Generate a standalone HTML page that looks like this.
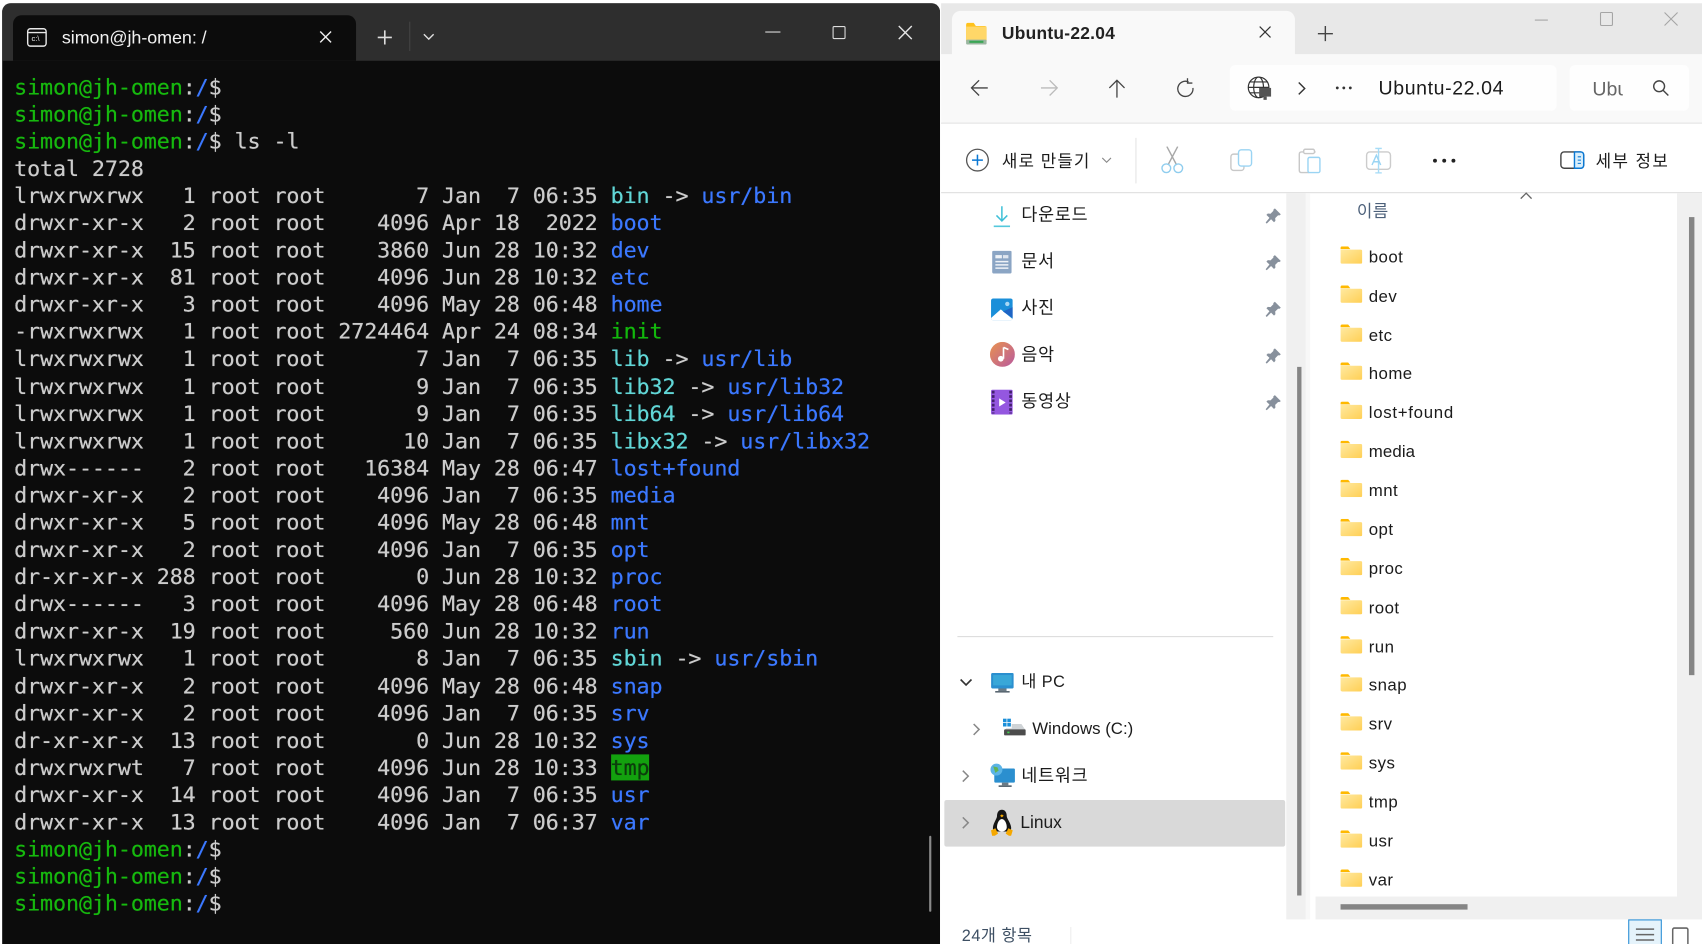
<!DOCTYPE html>
<html lang="ko"><head><meta charset="utf-8"><title>Ubuntu-22.04</title>
<style>
html,body{margin:0;padding:0;background:#fff;width:1702px;height:944px;overflow:hidden}
#w{position:absolute;left:0;top:0;width:1568px;height:870px;transform:scale(1.08546);transform-origin:0 0;overflow:hidden;background:#fff;font-family:"Liberation Sans","Noto Sans CJK KR",sans-serif;filter:blur(.3px)}
#w div,#w svg,#w pre{position:absolute}
.t{white-space:nowrap;color:#1b1b1b;line-height:20px}
pre{margin:0;left:13px;top:67.5px;font:20px/25.1px "DejaVu Sans Mono","Liberation Mono",monospace;letter-spacing:-.095px;color:#ccc;text-shadow:0 0 .5px currentColor}
.g{color:#16b80e}.b{color:#3b78ff}.c{color:#61d6d6}.e{color:#12b80c}.h{background:#13a10e;color:#0c3c0c}
.k{font-size:15.5px;letter-spacing:.4px;color:#1b1b1b}
.n{font-size:16px;color:#1b1b1b}
</style></head><body>
<div id="w">
<svg width="0" height="0"><defs>
<linearGradient id="fg" x1="0" y1="0" x2="1" y2="1"><stop offset="0" stop-color="#ffe9a0"/><stop offset="1" stop-color="#ffcf55"/></linearGradient>
<symbol id="fo" viewBox="0 0 20 16"><path d="M0 1.500Q0 0 1.500 0H7l2 2.500H0z" fill="#ffb900"/><path d="M0 3h18.500Q20 3 20 4.500V14.500Q20 16 18.500 16H1.500Q0 16 0 14.500z" fill="url(#fg)"/></symbol>
<symbol id="pin" viewBox="0 0 16 16"><path d="M9.500 1l5.500 5.500-1.500 1-1-.2-2.700 2.700.2 2.500-1.300 1.300-2.700-2.800L2 15l-1-1 3.500-4.300L1.700 7l1.300-1.300 2.500.2L8.200 3.200 8 2.300z" fill="#87909c"/></symbol>
<symbol id="mon" viewBox="0 0 22 20"><rect x="0" y="0" width="22" height="15" rx="1.500" fill="#2b8fcf"/><rect x="2" y="2" width="18" height="10" fill="#39a7d8"/><rect x="7" y="15" width="8" height="2.500" fill="#6c7b86"/><rect x="4" y="17.500" width="14" height="1.500" fill="#55636e"/></symbol>
</defs></svg>

<!-- TERMINAL -->
<div style="left:2px;top:3px;width:864px;height:867px;background:#0c0c0c;border-radius:8px 8px 0 0;overflow:hidden">
  <div style="left:0;top:0;width:864px;height:53px;background:#2e2e2e"></div>
  <div style="left:10px;top:11px;width:316px;height:42px;background:#0c0c0c;border-radius:8px 8px 0 0"></div>
</div>
<svg style="left:24px;top:25px" width="20" height="20" viewBox="0 0 20 20" fill="none" stroke="#e8e8e8" stroke-width="1.300"><rect x="1.500" y="1.500" width="17" height="16" rx="2.500"/><path d="M2 5h16"/></svg>
<div class="t" style="left:29px;top:33px;font:7px 'Liberation Sans';color:#eee">c:\</div>
<div class="t" style="left:57px;top:25px;color:#f2f2f2;font-size:16.500px;letter-spacing:-.05px">simon@jh-omen: /</div>
<svg style="left:294px;top:28px" width="12" height="12" fill="none" stroke="#eee" stroke-width="1.300"><path d="M1 1l10 10M11 1L1 11"/></svg>
<svg style="left:347px;top:27px" width="15" height="15" fill="none" stroke="#ddd" stroke-width="1.500"><path d="M7.500 1v13M1 7.500h13"/></svg>
<div style="left:377px;top:20px;width:1px;height:27px;background:#444"></div>
<svg style="left:389px;top:30px" width="12" height="8" fill="none" stroke="#ddd" stroke-width="1.300"><path d="M1.500 1.500L6 6l4.500-4.500"/></svg>
<div style="left:705px;top:29px;width:14px;height:1.300px;background:#ddd"></div>
<div style="left:767px;top:24px;width:10px;height:10px;border:1.300px solid #ddd;border-radius:1.500px"></div>
<svg style="left:827px;top:23px" width="14" height="14" fill="none" stroke="#e5e5e5" stroke-width="1.300"><path d="M1 1l12 12M13 1L1 13"/></svg>
<pre><span class="g">simon@jh-omen</span>:<span class="b">/</span>$
<span class="g">simon@jh-omen</span>:<span class="b">/</span>$
<span class="g">simon@jh-omen</span>:<span class="b">/</span>$ ls -l
total 2728
lrwxrwxrwx   1 root root       7 Jan  7 06:35 <span class="c">bin</span> -&gt; <span class="b">usr/bin</span>
drwxr-xr-x   2 root root    4096 Apr 18  2022 <span class="b">boot</span>
drwxr-xr-x  15 root root    3860 Jun 28 10:32 <span class="b">dev</span>
drwxr-xr-x  81 root root    4096 Jun 28 10:32 <span class="b">etc</span>
drwxr-xr-x   3 root root    4096 May 28 06:48 <span class="b">home</span>
-rwxrwxrwx   1 root root 2724464 Apr 24 08:34 <span class="e">init</span>
lrwxrwxrwx   1 root root       7 Jan  7 06:35 <span class="c">lib</span> -&gt; <span class="b">usr/lib</span>
lrwxrwxrwx   1 root root       9 Jan  7 06:35 <span class="c">lib32</span> -&gt; <span class="b">usr/lib32</span>
lrwxrwxrwx   1 root root       9 Jan  7 06:35 <span class="c">lib64</span> -&gt; <span class="b">usr/lib64</span>
lrwxrwxrwx   1 root root      10 Jan  7 06:35 <span class="c">libx32</span> -&gt; <span class="b">usr/libx32</span>
drwx------   2 root root   16384 May 28 06:47 <span class="b">lost+found</span>
drwxr-xr-x   2 root root    4096 Jan  7 06:35 <span class="b">media</span>
drwxr-xr-x   5 root root    4096 May 28 06:48 <span class="b">mnt</span>
drwxr-xr-x   2 root root    4096 Jan  7 06:35 <span class="b">opt</span>
dr-xr-xr-x 288 root root       0 Jun 28 10:32 <span class="b">proc</span>
drwx------   3 root root    4096 May 28 06:48 <span class="b">root</span>
drwxr-xr-x  19 root root     560 Jun 28 10:32 <span class="b">run</span>
lrwxrwxrwx   1 root root       8 Jan  7 06:35 <span class="c">sbin</span> -&gt; <span class="b">usr/sbin</span>
drwxr-xr-x   2 root root    4096 May 28 06:48 <span class="b">snap</span>
drwxr-xr-x   2 root root    4096 Jan  7 06:35 <span class="b">srv</span>
dr-xr-xr-x  13 root root       0 Jun 28 10:32 <span class="b">sys</span>
drwxrwxrwt   7 root root    4096 Jun 28 10:33 <span class="h">tmp</span>
drwxr-xr-x  14 root root    4096 Jan  7 06:35 <span class="b">usr</span>
drwxr-xr-x  13 root root    4096 Jan  7 06:37 <span class="b">var</span>
<span class="g">simon@jh-omen</span>:<span class="b">/</span>$
<span class="g">simon@jh-omen</span>:<span class="b">/</span>$
<span class="g">simon@jh-omen</span>:<span class="b">/</span>$</pre>
<div style="left:856px;top:770px;width:2px;height:70px;background:#8a8a8a;border-radius:1px"></div>

<!-- EXPLORER CHROME -->
<div style="left:867px;top:3px;width:701px;height:47px;background:#e8e8e8"></div>
<div style="left:877px;top:10px;width:316px;height:41px;background:#f9f9f9;border-radius:8px 8px 0 0"></div>
<div style="left:867px;top:50px;width:701px;height:63px;background:#f9f9f9;border-bottom:1px solid #e0e0e0"></div>
<svg style="left:890px;top:21px" width="19" height="20" viewBox="0 0 19 20"><path d="M0 2Q0 0 2 0H7l2 3h8q2 0 2 2v12H0z" fill="#ffc21c"/><rect y="3.500" width="19" height="13" fill="#ffd768"/><rect y="15.500" width="19" height="4.500" rx="1" fill="#9ab6a0"/><rect x="3" y="16.500" width="13" height="2" fill="#3aa655"/></svg>
<div class="t" style="left:923px;top:22px;font-size:16px;font-weight:700;color:#222;letter-spacing:.25px">Ubuntu-22.04</div>
<svg style="left:1160px;top:24px" width="11" height="11" fill="none" stroke="#333" stroke-width="1.100"><path d="M.5.500l10 10M10.500.500l-10 10"/></svg>
<svg style="left:1214px;top:24px" width="14" height="14" fill="none" stroke="#444" stroke-width="1.300"><path d="M7 0v14M0 7h14"/></svg>
<div style="left:1414px;top:18px;width:12px;height:1px;background:#a5a5a5"></div>
<div style="left:1474px;top:11px;width:10px;height:11px;border:1px solid #a5a5a5;border-radius:1.500px"></div>
<svg style="left:1533px;top:11px" width="13" height="13" fill="none" stroke="#a5a5a5" stroke-width="1"><path d="M.5.500l12 12M12.500.500l-12 12"/></svg>

<svg style="left:894px;top:73px" width="17" height="16" fill="none" stroke="#444" stroke-width="1.200"><path d="M16 8H1M8 1L1 8l7 7"/></svg>
<svg style="left:958px;top:73px" width="17" height="16" fill="none" stroke="#bbb" stroke-width="1.200"><path d="M1 8h15M9 1l7 7-7 7"/></svg>
<svg style="left:1021px;top:73px" width="16" height="17" fill="none" stroke="#444" stroke-width="1.200"><path d="M8 17V1M1 8l7-7 7 7"/></svg>
<svg style="left:1084px;top:72px" width="17" height="18" fill="none" stroke="#444" stroke-width="1.200"><path d="M11 3.500A7 7 0 1 0 15 9"/><path d="M10 0v4.500h4.500"/></svg>
<div style="left:1133px;top:60px;width:301px;height:42px;background:#fefefe;border-radius:5px"></div>
<svg style="left:1149px;top:70px" width="24" height="24" viewBox="0 0 24 24" fill="none" stroke="#333" stroke-width="1.100"><circle cx="10.500" cy="10.500" r="9.500"/><ellipse cx="10.500" cy="10.500" rx="4.500" ry="9.500"/><path d="M1 10.500h19M2.500 5.500h16M2.500 15.500h16"/><rect x="11" y="11" width="11" height="8" fill="#555" stroke="none"/><rect x="15" y="19" width="3" height="3" fill="#555" stroke="none"/></svg>
<svg style="left:1195px;top:75px" width="9" height="13" fill="none" stroke="#333" stroke-width="1.300"><path d="M1.500 1l5.500 5.500L1.500 12"/></svg>
<svg style="left:1230px;top:79px" width="16" height="4" fill="#333"><circle cx="2" cy="2" r="1.300"/><circle cx="8" cy="2" r="1.300"/><circle cx="14" cy="2" r="1.300"/></svg>
<div class="t" style="left:1270px;top:71px;font-size:18px;color:#1b1b1b;letter-spacing:.55px">Ubuntu-22.04</div>
<div style="left:1446px;top:60px;width:110px;height:42px;background:#fefefe;border-radius:5px"></div>
<div class="t" style="left:1467px;top:72px;width:28px;overflow:hidden;font-size:18px;color:#666">Ubuntu</div>
<svg style="left:1522px;top:73px" width="16" height="16" fill="none" stroke="#444" stroke-width="1.300"><circle cx="6.500" cy="6.500" r="5"/><path d="M10 10l5 5"/></svg>

<!-- TOOLBAR -->
<div style="left:867px;top:114px;width:701px;height:63px;background:#fff;border-bottom:1px solid #dedede"></div>
<svg style="left:889px;top:136px" width="23" height="23" fill="none"><circle cx="11.500" cy="11.500" r="10" stroke="#555" stroke-width="1.200"/><path d="M11.500 6.500v10M6.500 11.500h10" stroke="#0a78d4" stroke-width="1.400"/></svg>
<div class="t n" style="left:923px;top:138px;font-size:15.500px;letter-spacing:1px;top:140px">새로 만들기</div>
<svg style="left:1015px;top:145px" width="9" height="6" fill="none" stroke="#888"><path d="M.5.500L4.500 4.500 8.500.500"/></svg>
<div style="left:1046px;top:127px;width:1px;height:42px;background:#e5e5e5"></div>
<svg style="left:1069px;top:135px" width="22" height="25" fill="none" stroke-width="1.300"><path d="M6 0l9 17M16 0L7 17" stroke="#a8a8a8"/><circle cx="5.500" cy="20" r="4" stroke="#8fcdee"/><circle cx="16.500" cy="20" r="4" stroke="#8fcdee"/></svg>
<svg style="left:1133px;top:137px" width="21" height="23" fill="none" stroke-width="1.300"><rect x="1" y="5" width="12" height="15" rx="2.500" stroke="#c8c8c8"/><rect x="8" y="1" width="12" height="15" rx="2.500" fill="#fff" stroke="#9ad4f3"/></svg>
<svg style="left:1196px;top:136px" width="21" height="24" fill="none" stroke-width="1.300"><path d="M5 4H3Q1 4 1 6v15q0 2 2 2h7M16 4h-1" stroke="#c8c8c8"/><rect x="5" y="1.500" width="10" height="4" rx="1.500" stroke="#c8c8c8"/><rect x="9" y="9" width="11" height="14" rx="1.500" stroke="#9ad4f3"/></svg>
<svg style="left:1258px;top:136px" width="24" height="24" fill="none" stroke-width="1.300"><rect x="1" y="4" width="22" height="16" rx="3" stroke="#ccc"/><path d="M12 .5v23M9 .7h6M9 23.300h6" stroke="#a6dcf7" fill="#fff"/><path d="M6 16l4-9 4 9M7.500 13h5" stroke="#9ad4f3"/></svg>
<svg style="left:1319px;top:145px" width="23" height="6" fill="#222"><circle cx="3" cy="3" r="1.800"/><circle cx="11.500" cy="3" r="1.800"/><circle cx="20" cy="3" r="1.800"/></svg>
<svg style="left:1437px;top:139px" width="23" height="18" fill="none" stroke-width="1.300"><rect x="1" y="1" width="21" height="15" rx="3" stroke="#444"/><path d="M13.500 1H19q3 0 3 3v9q0 3-3 3h-5.500z" fill="#d8eefb" stroke="#0a78d4"/><path d="M16.500 5.500h3M16.500 8.500h3M16.500 11.500h3" stroke="#0a78d4" stroke-width="1"/></svg>
<div class="t n" style="left:1470px;top:140px;font-size:15.500px;letter-spacing:1.300px">세부 정보</div>

<!-- SIDEBAR -->
<div style="left:1185px;top:178px;width:18px;height:669px;background:#f0f0f0"></div>
<div style="left:1195px;top:338px;width:4px;height:487px;background:#858585"></div>
<div style="left:1203px;top:178px;width:4px;height:669px;background:#f8f8f8"></div>

<svg style="left:914px;top:189px" width="18" height="21" fill="none" stroke="#3fc0d8" stroke-width="1.400"><path d="M9 1v13M4 9.500L9 14.500l5-5"/><path d="M1.500 19.500h15" stroke="#55c8dc"/></svg>
<div class="t n" style="left:941px;top:189px;letter-spacing:.7px">다운로드</div>
<svg style="left:914px;top:231px" width="18" height="21"><rect width="18" height="21" rx="1.500" fill="#8ba5c4"/><rect x="3" y="4" width="6" height="3" fill="#eef2f7"/><rect x="10" y="4" width="5" height="3" fill="#dfe6ef"/><path d="M3 10h12M3 13h12M3 16h12" stroke="#eef2f7" stroke-width="1.400"/></svg>
<div class="t n" style="left:941px;top:232px;letter-spacing:.7px">문서</div>
<svg style="left:913px;top:275px" width="20" height="20"><rect width="20" height="20" rx="2" fill="#1b8fd9"/><path d="M0 18L9 10l11 9v-1 0q0 2-2 2H2q-2 0-2-2z" fill="#fff"/><circle cx="15" cy="5" r="2" fill="#a8d8f5"/><path d="M11 12l9 6V8z" fill="#1f64c4"/></svg>
<div class="t n" style="left:941px;top:275px;letter-spacing:.7px">사진</div>
<svg style="left:912px;top:315px" width="23" height="23"><defs><linearGradient id="mu" x1="0" y1="0" x2="1" y2="1"><stop offset="0" stop-color="#e8924f"/><stop offset="1" stop-color="#b95a9e"/></linearGradient></defs><circle cx="11.500" cy="11.500" r="11.500" fill="url(#mu)"/><path d="M12.500 5v10.500" stroke="#fff" stroke-width="1.500"/><path d="M12.500 5l4.500 2" stroke="#fff" stroke-width="1.500"/><circle cx="10" cy="15.500" r="2.600" fill="#fff"/></svg>
<div class="t n" style="left:941px;top:318px;letter-spacing:.7px">음악</div>
<svg style="left:913px;top:359px" width="20" height="23"><rect width="20" height="23" rx="1.500" fill="#9457e0"/><path d="M2 1v21M18 1v21" stroke="#43206e" stroke-width="2.500" stroke-dasharray="2.500 1.500"/><path d="M7.500 8v7.500l6-3.700z" fill="#fff"/></svg>
<div class="t n" style="left:941px;top:361px;letter-spacing:.7px">동영상</div>
<svg style="left:1165px;top:191px" width="16" height="16"><use href="#pin"/></svg>
<svg style="left:1165px;top:234px" width="16" height="16"><use href="#pin"/></svg>
<svg style="left:1165px;top:277px" width="16" height="16"><use href="#pin"/></svg>
<svg style="left:1165px;top:320px" width="16" height="16"><use href="#pin"/></svg>
<svg style="left:1165px;top:363px" width="16" height="16"><use href="#pin"/></svg>
<div style="left:882px;top:586px;width:291px;height:1px;background:#dcdcdc"></div>
<svg style="left:884px;top:625px" width="12" height="8" fill="none" stroke="#333" stroke-width="1.500"><path d="M1 1l5 5 5-5"/></svg>
<svg style="left:913px;top:620px" width="21" height="19"><use href="#mon"/></svg>
<div class="t n" style="left:941px;top:619px;font-size:15px;letter-spacing:.4px">내 PC</div>
<svg style="left:896px;top:666px" width="8" height="12" fill="none" stroke="#888" stroke-width="1.400"><path d="M1 1l5 5-5 5"/></svg>
<svg style="left:924px;top:662px" width="21" height="18"><rect x="0" y="0" width="3.300" height="3.300" fill="#1b8fd9"/><rect x="4" y="0" width="3.300" height="3.300" fill="#1b8fd9"/><rect x="0" y="4" width="3.300" height="3.300" fill="#1b8fd9"/><rect x="4" y="4" width="3.300" height="3.300" fill="#1b8fd9"/><path d="M8 5h9l4 6H1l2-2h5z" fill="#cfd3d6"/><rect x="1" y="10" width="20" height="5.500" rx="1" fill="#4c4c4c"/><rect x="4" y="12" width="2" height="1.500" fill="#3fd44c"/></svg>
<div class="t n" style="left:951px;top:662px;font-size:15.500px">Windows (C:)</div>
<svg style="left:886px;top:709px" width="8" height="12" fill="none" stroke="#888" stroke-width="1.400"><path d="M1 1l5 5-5 5"/></svg>
<svg style="left:912px;top:703px" width="24" height="23"><rect x="4" y="5" width="19" height="13" rx="1" fill="#2b8fcf"/><rect x="11" y="18" width="6" height="2.500" fill="#6c7b86"/><rect x="8" y="20.500" width="12" height="1.500" fill="#55636e"/><circle cx="6" cy="6" r="5.500" fill="#5cb4e6"/><path d="M3 3l4 1 1 3-3 2z" fill="#62b356"/></svg>
<div class="t n" style="left:941px;top:706px;letter-spacing:.7px">네트워크</div>
<div style="left:870px;top:737px;width:314px;height:43px;background:#d9d9d9;border-radius:2px"></div>
<svg style="left:886px;top:752px" width="8" height="12" fill="none" stroke="#888" stroke-width="1.400"><path d="M1 1l5 5-5 5"/></svg>
<svg style="left:912px;top:745px" width="22" height="26" viewBox="0 0 22 26"><path d="M11 1c3 0 4.500 2.500 4.500 6 0 2 3.500 6 4 10 .3 3-1 4-2 4H5c-1.500 0-2.500-1-2.200-4C3.300 13 6.500 9 6.500 7 6.500 3.500 8 1 11 1z" fill="#151515"/><path d="M11 9.500c-2.500 0-4.500 4-4.500 7.500 0 2 1.500 4 4.500 4s4.500-2 4.500-4c0-3.500-2-7.500-4.500-7.500z" fill="#fff"/><path d="M9.300 6.500l1.700-1.200 1.700 1.200L11 8z" fill="#f5a800"/><path d="M1 20l4-2 2.500 5-3 2H2zM21 20l-4-2-2.500 5 3 2h2z" fill="#f5a800"/></svg>
<div class="t n" style="left:940px;top:749px;font-size:16px">Linux</div>

<!-- FILE LIST -->
<div style="left:1545px;top:178px;width:23px;height:669px;background:#f0f0f0"></div>
<div style="left:1556px;top:200px;width:5px;height:422px;background:#858585"></div>
<svg style="left:1400px;top:176px" width="12" height="8" fill="none" stroke="#666" stroke-width="1.200"><path d="M1 7l5-5 5 5"/></svg>
<div class="t k" style="left:1250px;top:186px;color:#4c607a">이름</div>
<svg style="left:1235px;top:227px" width="20" height="16"><use href="#fo"/></svg><div class="t k" style="left:1261px;top:227.500px">boot</div>
<svg style="left:1235px;top:263px" width="20" height="16"><use href="#fo"/></svg><div class="t k" style="left:1261px;top:263.500px">dev</div>
<svg style="left:1235px;top:299px" width="20" height="16"><use href="#fo"/></svg><div class="t k" style="left:1261px;top:299.500px">etc</div>
<svg style="left:1235px;top:334px" width="20" height="16"><use href="#fo"/></svg><div class="t k" style="left:1261px;top:334.500px">home</div>
<svg style="left:1235px;top:370px" width="20" height="16"><use href="#fo"/></svg><div class="t k" style="left:1261px;top:370.500px;letter-spacing:.65px">lost+found</div>
<svg style="left:1235px;top:406px" width="20" height="16"><use href="#fo"/></svg><div class="t k" style="left:1261px;top:406.500px;letter-spacing:.1px">media</div>
<svg style="left:1235px;top:442px" width="20" height="16"><use href="#fo"/></svg><div class="t k" style="left:1261px;top:442.500px">mnt</div>
<svg style="left:1235px;top:478px" width="20" height="16"><use href="#fo"/></svg><div class="t k" style="left:1261px;top:478.500px">opt</div>
<svg style="left:1235px;top:514px" width="20" height="16"><use href="#fo"/></svg><div class="t k" style="left:1261px;top:514.500px">proc</div>
<svg style="left:1235px;top:550px" width="20" height="16"><use href="#fo"/></svg><div class="t k" style="left:1261px;top:550.500px">root</div>
<svg style="left:1235px;top:586px" width="20" height="16"><use href="#fo"/></svg><div class="t k" style="left:1261px;top:586.500px">run</div>
<svg style="left:1235px;top:621px" width="20" height="16"><use href="#fo"/></svg><div class="t k" style="left:1261px;top:621.500px">snap</div>
<svg style="left:1235px;top:657px" width="20" height="16"><use href="#fo"/></svg><div class="t k" style="left:1261px;top:657.500px">srv</div>
<svg style="left:1235px;top:693px" width="20" height="16"><use href="#fo"/></svg><div class="t k" style="left:1261px;top:693.500px">sys</div>
<svg style="left:1235px;top:729px" width="20" height="16"><use href="#fo"/></svg><div class="t k" style="left:1261px;top:729.500px">tmp</div>
<svg style="left:1235px;top:765px" width="20" height="16"><use href="#fo"/></svg><div class="t k" style="left:1261px;top:765.500px">usr</div>
<svg style="left:1235px;top:801px" width="20" height="16"><use href="#fo"/></svg><div class="t k" style="left:1261px;top:801.500px">var</div>
<div style="left:1212px;top:826px;width:333px;height:21px;background:#f0f0f0"></div>
<div style="left:1235px;top:833px;width:117px;height:5px;background:#858585"></div>

<!-- STATUS -->
<div class="t" style="left:886px;top:853px;font-size:15px;letter-spacing:.5px;color:#3d4f63">24개 항목</div>
<div style="left:986px;top:854px;width:1px;height:16px;background:#eee"></div>
<div style="left:1500px;top:847px;width:29px;height:30px;background:#e5f3fb;border:1.500px solid #2b8fd6"></div>
<svg style="left:1507px;top:854px" width="17" height="16" stroke="#666" stroke-width="1.400"><path d="M0 2h17M0 7h17M0 12h17"/></svg>
<svg style="left:1540px;top:854px" width="16" height="16" fill="none" stroke="#666" stroke-width="1.400"><rect x="1" y="1" width="14" height="18" rx="1.500"/></svg>
</div>
</body></html>
